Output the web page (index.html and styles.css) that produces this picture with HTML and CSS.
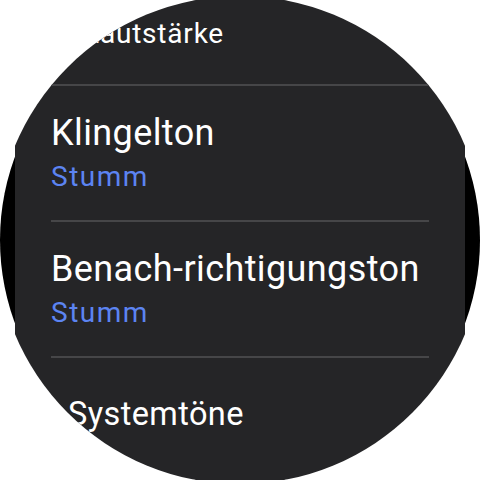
FILE: index.html
```html
<!DOCTYPE html>
<html lang="de">
<head>
  <meta charset="UTF-8">
  <meta name="viewport" content="width=device-width, initial-scale=1.0">
  <title>Töne</title>
  <link rel="stylesheet" href="styles.css">
</head>
<body>
  <div class="watch">
    <div class="screen">
      <ul class="list">
        <li class="item item--top"><span class="title">Lautstärke</span></li>
        <li class="item">
          <span class="title">Klingelton</span>
          <span class="value">Stumm</span>
        </li>
        <li class="item">
          <span class="title">Benach-richtigungston</span>
          <span class="value">Stumm</span>
        </li>
        <li class="item item--bottom"><span class="title">Systemtöne</span></li>
      </ul>
    </div>
  </div>
</body>
</html>
```

FILE: styles.css
```css
body {
  margin: 0;
  background: #fff;
  font-family: Roboto, "Noto Sans", sans-serif;
}
.watch {
  width: 480px;
  height: 480px;
  border-radius: 50%;
  background: #000;
  display: flex;
  justify-content: center;
}
.screen {
  width: 450px;
  height: 480px;
  overflow: hidden;
  clip-path: circle(244px at 225px 240px);
  background: #252527;
}
.list {
  list-style: none;
  margin: 0;
  padding: 0 36px;
}
.item {
  display: flex;
  flex-direction: column;
  padding: 25px 0;
}
.item + .item {
  border-top: 2px solid #464648;
}
.title {
  color: #fff;
  font-size: 36px;
  line-height: 44px;
  letter-spacing: 0.4px;
}
.value {
  color: #5c84f2;
  font-size: 28px;
  line-height: 36px;
  letter-spacing: 1.5px;
  margin-top: 4px;
}
/* items near the edge of the round screen are drawn smaller */
.item--top {
  padding: 18px 0 34px 33px;
}
.item--top .title {
  font-size: 28px;
  line-height: 32px;
  letter-spacing: 0.8px;
}
.item--bottom {
  padding: 36px 0 0 17px;
}
.item--bottom .title {
  font-size: 32.5px;
  line-height: 40px;
}
```
